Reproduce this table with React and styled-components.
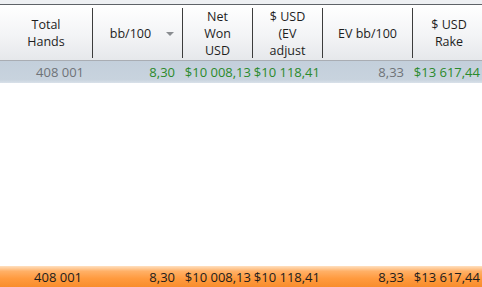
import styled, { createGlobalStyle } from 'styled-components';

const GlobalStyle = createGlobalStyle`
  html, body {
    margin: 0;
    padding: 0;
    background: #fff;
    overflow: hidden;
  }
  body {
    font-family: 'Open Sans', 'Liberation Sans', sans-serif;
  }
`

const columns = [
  { title: ['Total', 'Hands'], width: 93 },
  { title: ['bb/100'], width: 90, sorted: true },
  { title: ['Net', 'Won', 'USD'], width: 70 },
  { title: ['$ USD', '(EV', 'adjust'], width: 70 },
  { title: ['EV bb/100'], width: 90 },
  { title: ['$ USD', 'Rake'], width: 72 },
];

const grid = columns.map(c => c.width + 'px').join(' ');

const row = [
  { text: '408 001', tone: 'gray', pad: 9 },
  { text: '8,30', tone: 'green', pad: 8 },
  { text: '$10 008,13', tone: 'green', pad: 2 },
  { text: '$10 118,41', tone: 'green', pad: 3 },
  { text: '8,33', tone: 'gray', pad: 9 },
  { text: '$13 617,44', tone: 'green', pad: 5 },
];

const totals = [
  { text: '408 001', pad: 11 },
  { text: '8,30', pad: 8 },
  { text: '$10 008,13', pad: 2 },
  { text: '$10 118,41', pad: 3 },
  { text: '8,33', pad: 9 },
  { text: '$13 617,44', pad: 5 },
];

export default function App() {
  return (
    <Page>
      <GlobalStyle />
      <TopStrip />
      <Header>
        {columns.map((c, i) => (
          <HeadCell key={i} $sorted={c.sorted}>
            <HeadText>
              {c.title.map((line, j) => <span key={j}>{line}</span>)}
            </HeadText>
            {c.sorted && <SortArrow />}
          </HeadCell>
        ))}
      </Header>
      <DataRow>
        {row.map((c, i) => (
          <Cell key={i} $tone={c.tone} $pad={c.pad}>{c.text}</Cell>
        ))}
      </DataRow>
      <Empty />
      <Footer>
        {totals.map((c, i) => (
          <FootCell key={i} $pad={c.pad}>{c.text}</FootCell>
        ))}
      </Footer>
    </Page>
  );
}

const Page = styled.div`
  width: 482px;
  height: 287px;
  display: flex;
  flex-direction: column;
  overflow: hidden;
  font-size: 12px;
`
const TopStrip = styled.div`
  height: 4px;
  background: #eef0f3;
  border-bottom: 1px solid #5f6368;
  flex: none;
`
const Header = styled.div`
  display: grid;
  grid-template-columns: ${grid};
  height: 50px;
  padding: 3px 0 2px;
  background: linear-gradient(#ffffff, #f3f4f6 55%, #e6e8eb);
  border-bottom: 1px solid #a9adb3;
  flex: none;
`
const HeadCell = styled.div`
  position: relative;
  display: flex;
  align-items: center;
  justify-content: center;
  border-right: 1px solid #3c3c3c;
  padding-right: ${p => p.$sorted ? '14px' : '0'};
  overflow: hidden;
  &:last-child {
    border-right: none;
  }
`
const HeadText = styled.div`
  display: flex;
  flex-direction: column;
  align-items: center;
  line-height: 17px;
  font-size: 12.5px;
  color: #1e1e1e;
  white-space: nowrap;
`
const SortArrow = styled.span`
  position: absolute;
  right: 8px;
  top: 50%;
  margin-top: -1px;
  border-left: 4px solid transparent;
  border-right: 4px solid transparent;
  border-top: 4px solid #8a8d91;
`
const DataRow = styled.div`
  display: grid;
  grid-template-columns: ${grid};
  height: 22px;
  background: linear-gradient(#c3cfdb, #c8d3de 85%, #d9e1e9);
  border-left: 2px solid #dde4eb;
  margin-left: -2px;
  flex: none;
`
const Cell = styled.div`
  display: flex;
  align-items: center;
  justify-content: flex-end;
  padding-right: ${p => p.$pad}px;
  padding-left: 3px;
  overflow: hidden;
  white-space: nowrap;
  font-size: 13px;
  color: ${p => p.$tone === 'green' ? '#2b8a2b' : '#6f7378'};
`
const Empty = styled.div`
  flex: 1;
  background: #fff;
`
const Footer = styled.div`
  display: grid;
  grid-template-columns: ${grid};
  height: 21px;
  background: linear-gradient(#ffe0c0 0%, #ffb066 25%, #ff9a3e 60%, #f88d2c 100%);
  flex: none;
`
const FootCell = styled(Cell)`
  color: #1c1c1c;
`
